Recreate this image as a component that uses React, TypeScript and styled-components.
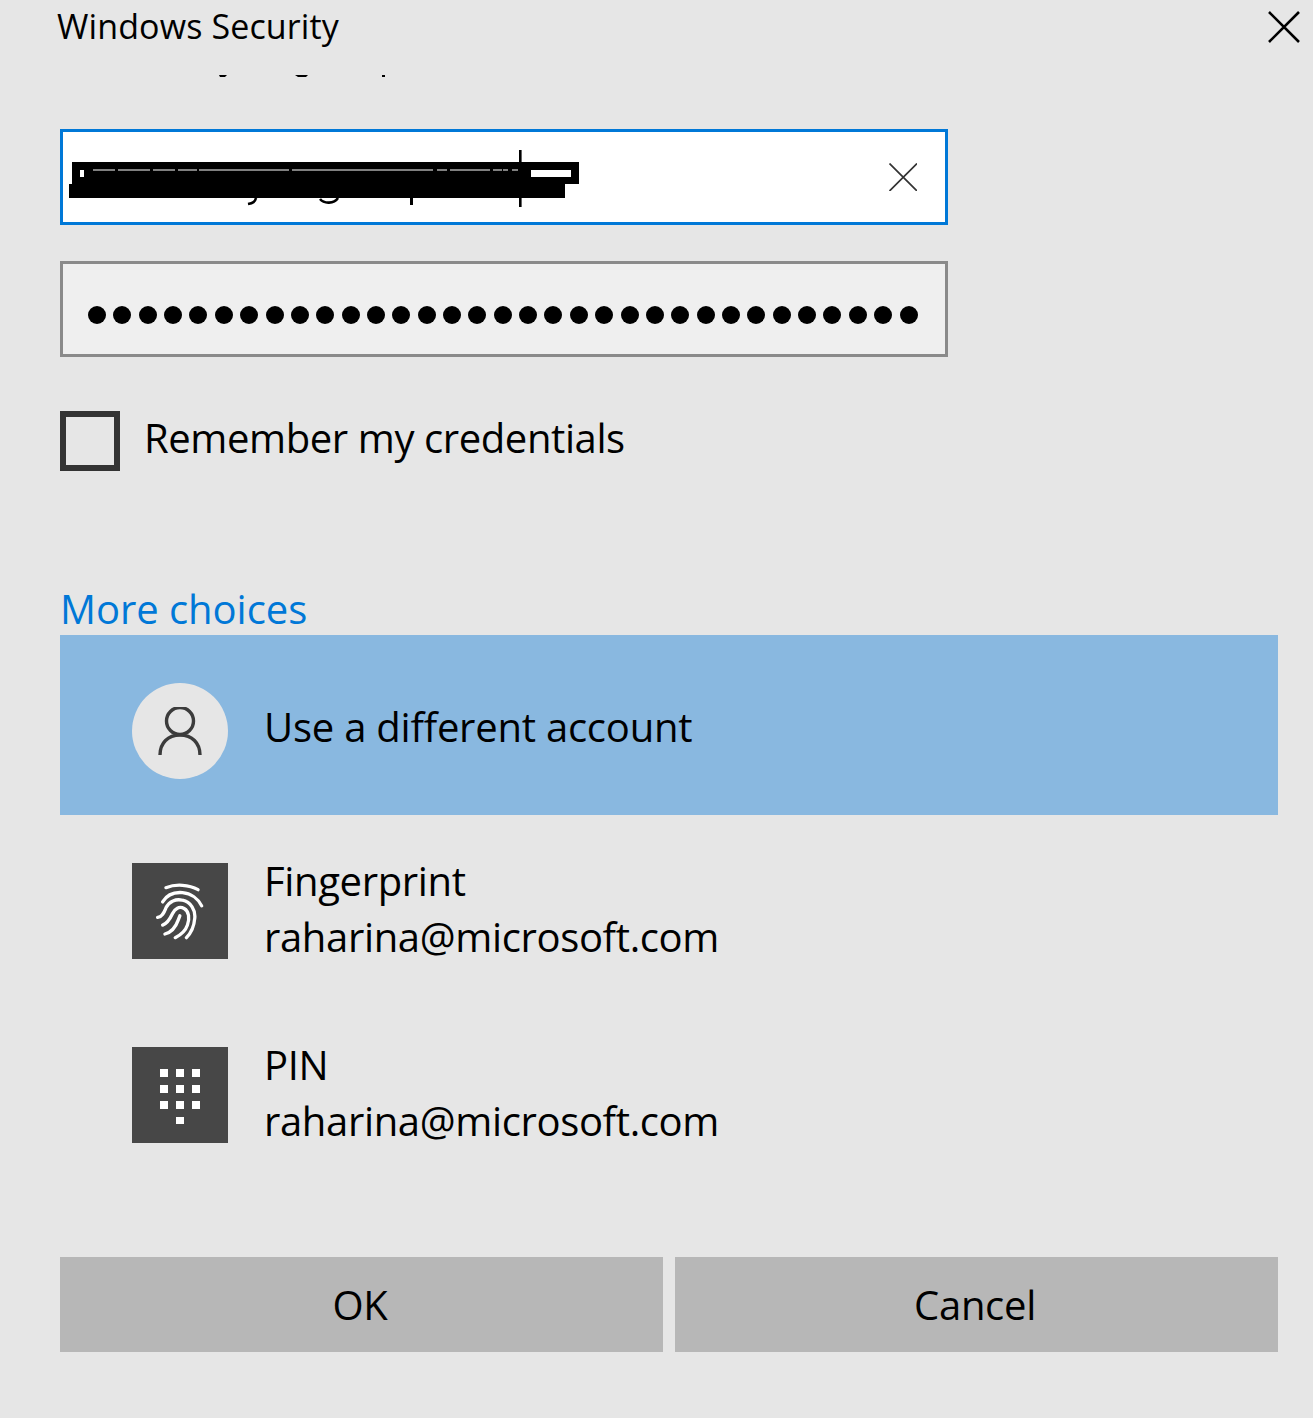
import React from "react";
import styled, { createGlobalStyle } from "styled-components";

const Global = createGlobalStyle`
  html, body { margin: 0; padding: 0; background: #e6e6e6; }
  body { font-family: "Open Sans", "Noto Sans", "Liberation Sans", sans-serif; color: #000; }
`;
const Dialog = styled.div`
  width: 1313px; height: 1418px; background: #e6e6e6; box-sizing: border-box;
  padding: 0 35px 0 60px; overflow: hidden; display: flex; flex-direction: column;
`;
const Header = styled.header`
  height: 129px; position: relative; display: flex; justify-content: space-between; align-items: flex-start;
`;
const Title = styled.h1`
  margin: 4px 0 0 -3px; font-size: 34px; line-height: 44px; font-weight: 400; letter-spacing: 0.12px;
`;
const CloseButton = styled.button`
  border: 0; padding: 0; background: none; width: 32px; height: 32px; margin: 11px -22px 0 0; display: block;
`;
const ClippedTails = styled.svg`
  position: absolute; left: 150px; top: 70px;
`;
const Field = styled.div<{ $focused?: boolean }>`
  width: 888px; height: 96px; box-sizing: border-box; position: relative;
  border: 3px solid ${p => (p.$focused ? "#0078d7" : "#8a8a8a")};
  background: ${p => (p.$focused ? "#fff" : "#efefef")};
  display: flex; align-items: center;
`;
const ClearIcon = styled.svg`
  position: absolute; left: 826px; top: 31px;
`;
const Redaction = styled.svg`
  position: absolute; left: 5px; top: 17px;
`;
const PasswordDots = styled.div`
  margin: 12px 0 0 25px; display: flex; gap: 7.36px;
`;
const Dot = styled.span`
  width: 18px; height: 18px; border-radius: 50%; background: #000; display: block;
`;
const PasswordField = styled(Field)`
  margin-top: 36px;
`;
const CheckRow = styled.label`
  margin-top: 54px; display: flex; align-items: center; gap: 24px; height: 60px;
`;
const CheckBox = styled.span`
  width: 60px; height: 60px; box-sizing: border-box; border: 6px solid #333; display: block;
`;
const CheckLabel = styled.span`
  font-size: 40px; line-height: 54px; letter-spacing: -0.4px; margin-top: -6px;
`;
const MoreChoices = styled.a`
  margin-top: 112px; height: 52px; font-size: 40px; line-height: 52px; color: #0078d7; letter-spacing: -0.05px; display: block;
`;
const Choice = styled.div<{ $selected?: boolean }>`
  height: ${p => (p.$selected ? 180 : 184)}px; box-sizing: border-box; display: flex; align-items: ${p => (p.$selected ? "center" : "flex-start")};
  padding: ${p => (p.$selected ? "0" : "48px")} 0 0 72px; gap: 36px;
  background: ${p => (p.$selected ? "#89b8e0" : "transparent")};
`;
const Avatar = styled.div`
  width: 96px; height: 96px; border-radius: 50%; background: #e6e6e6; display: flex; align-items: center; justify-content: center; flex: none;
  margin-top: 12px;
`;
const Tile = styled.div`
  width: 96px; height: 96px; background: #474747; display: flex; align-items: center; justify-content: center; flex: none;
`;
const ChoiceText = styled.div`
  display: flex; flex-direction: column; margin-top: -10px;
`;
const ChoiceLine = styled.div`
  font-size: 40px; line-height: 56px; letter-spacing: -0.35px; white-space: nowrap;
`;
const SingleLine = styled(ChoiceLine)`
  margin-top: 4px; letter-spacing: -0.23px;
`;
const Buttons = styled.div`
  margin-top: 74px; display: grid; grid-template-columns: 603px 603px; gap: 12px;
`;
const Btn = styled.button`
  height: 95px; border: 0; background: #b7b7b7; font: inherit; font-size: 40px; letter-spacing: -0.3px; color: #000; padding: 0 3px 0 0;
`;

const accounts = [
  { name: "Fingerprint", kind: "finger" },
  { name: "PIN", kind: "pin" },
];

const scratches: [number, number][] = [
  [25, 47], [50, 82], [85, 107], [110, 129], [131, 221], [224, 365],
  [369, 379], [382, 422], [425, 434], [435, 440], [444, 450],
];

const FingerIcon = () => (
  <svg width="48" height="58" viewBox="105 80 145 175" fill="none" stroke="#fff" strokeWidth="10" strokeLinecap="round">
    <path d="M135 97 C165 85 205 88 232 103" />
    <path d="M125 140 C140 115 160 110 185 112 C210 114 232 130 243 152" />
    <path d="M110 187 C125 185 130 170 135 158 C145 138 165 130 185 135 C210 140 225 165 222 190 C220 215 210 235 197 248" />
    <path d="M125 210 C140 205 148 190 155 175 C162 160 175 152 190 160 C205 168 207 190 200 210 C195 225 180 240 163 248" />
    <path d="M132 237 C150 232 165 215 172 195 L177 182" />
  </svg>
);

const PinIcon = () => (
  <svg width="42" height="58" viewBox="0 0 42 58" fill="#fff">
    {[0, 1, 2, 3].flatMap(r =>
      [0, 1, 2].filter(c => r < 3 || c === 1).map(c => (
        <rect key={`${r}-${c}`} x={1 + c * 16} y={3 + r * 16} width="8" height="8" />
      ))
    )}
  </svg>
);

export default function App() {
  return (
    <>
      <Global />
      <Dialog>
        <Header>
          <Title>Windows Security</Title>
          <CloseButton aria-label="Close">
            <svg width="32" height="32" viewBox="0 0 32 32" stroke="#000" strokeWidth="2.6">
              <path d="M1 1 L31 31 M31 1 L1 31" />
            </svg>
          </CloseButton>
          <ClippedTails width="190" height="10" viewBox="0 0 190 10" fill="#000">
            <path d="M9 5 H17 L15 7 H10 Z" />
            <path d="M85 5 H98 L96 7 H88 Z" />
            <rect x="172" y="5" width="3" height="2" />
          </ClippedTails>
        </Header>
        <Field $focused>
          <Redaction width="520" height="62" viewBox="0 0 520 62">
            <path fill="#000" d="M4 13 H511 V35 H497 V49 H1 V35 H4 Z" />
            <path fill="none" stroke="#000" strokeWidth="2.6" d="M188 49 C187 53 185 54 180 55" />
            <path fill="none" stroke="#000" strokeWidth="2.6" d="M252 50 C256 55 266 55 270 49" />
            <rect x="342" y="49" width="3" height="7" fill="#000" />
            <rect x="451" y="1" width="2.6" height="57" fill="#000" />
            <rect x="463" y="21" width="40" height="7" fill="#fff" />
            <rect x="12" y="21" width="4" height="7" fill="#fff" />
            {scratches.map(([a, b]) => (
              <rect key={a} x={a} y="20.5" width={b - a} height="1" fill="#fff" />
            ))}
          </Redaction>
          <ClearIcon width="28" height="28" viewBox="0 0 28 28" stroke="#333" strokeWidth="1.7">
            <path d="M0.5 0.5 L28 28 M28 0.5 L0.5 28" />
          </ClearIcon>
        </Field>
        <PasswordField>
          <PasswordDots>
            {Array.from({ length: 33 }, (_, i) => <Dot key={i} />)}
          </PasswordDots>
        </PasswordField>
        <CheckRow>
          <CheckBox />
          <CheckLabel>Remember my credentials</CheckLabel>
        </CheckRow>
        <MoreChoices>More choices</MoreChoices>
        <Choice $selected>
          <Avatar>
            <svg width="44" height="48" viewBox="0 0 44 48" fill="none" stroke="#3c3c3c" strokeWidth="3.4">
              <circle cx="22" cy="14" r="13.5" />
              <path d="M2 48 C2 36 10 28 22 28 C34 28 42 36 42 48" />
            </svg>
          </Avatar>
          <SingleLine>Use a different account</SingleLine>
        </Choice>
        {accounts.map(a => (
          <Choice key={a.name}>
            <Tile>{a.kind === "finger" ? <FingerIcon /> : <PinIcon />}</Tile>
            <ChoiceText>
              <ChoiceLine>{a.name}</ChoiceLine>
              <ChoiceLine>raharina@microsoft.com</ChoiceLine>
            </ChoiceText>
          </Choice>
        ))}
        <Buttons>
          <Btn>OK</Btn>
          <Btn>Cancel</Btn>
        </Buttons>
      </Dialog>
    </>
  );
}
